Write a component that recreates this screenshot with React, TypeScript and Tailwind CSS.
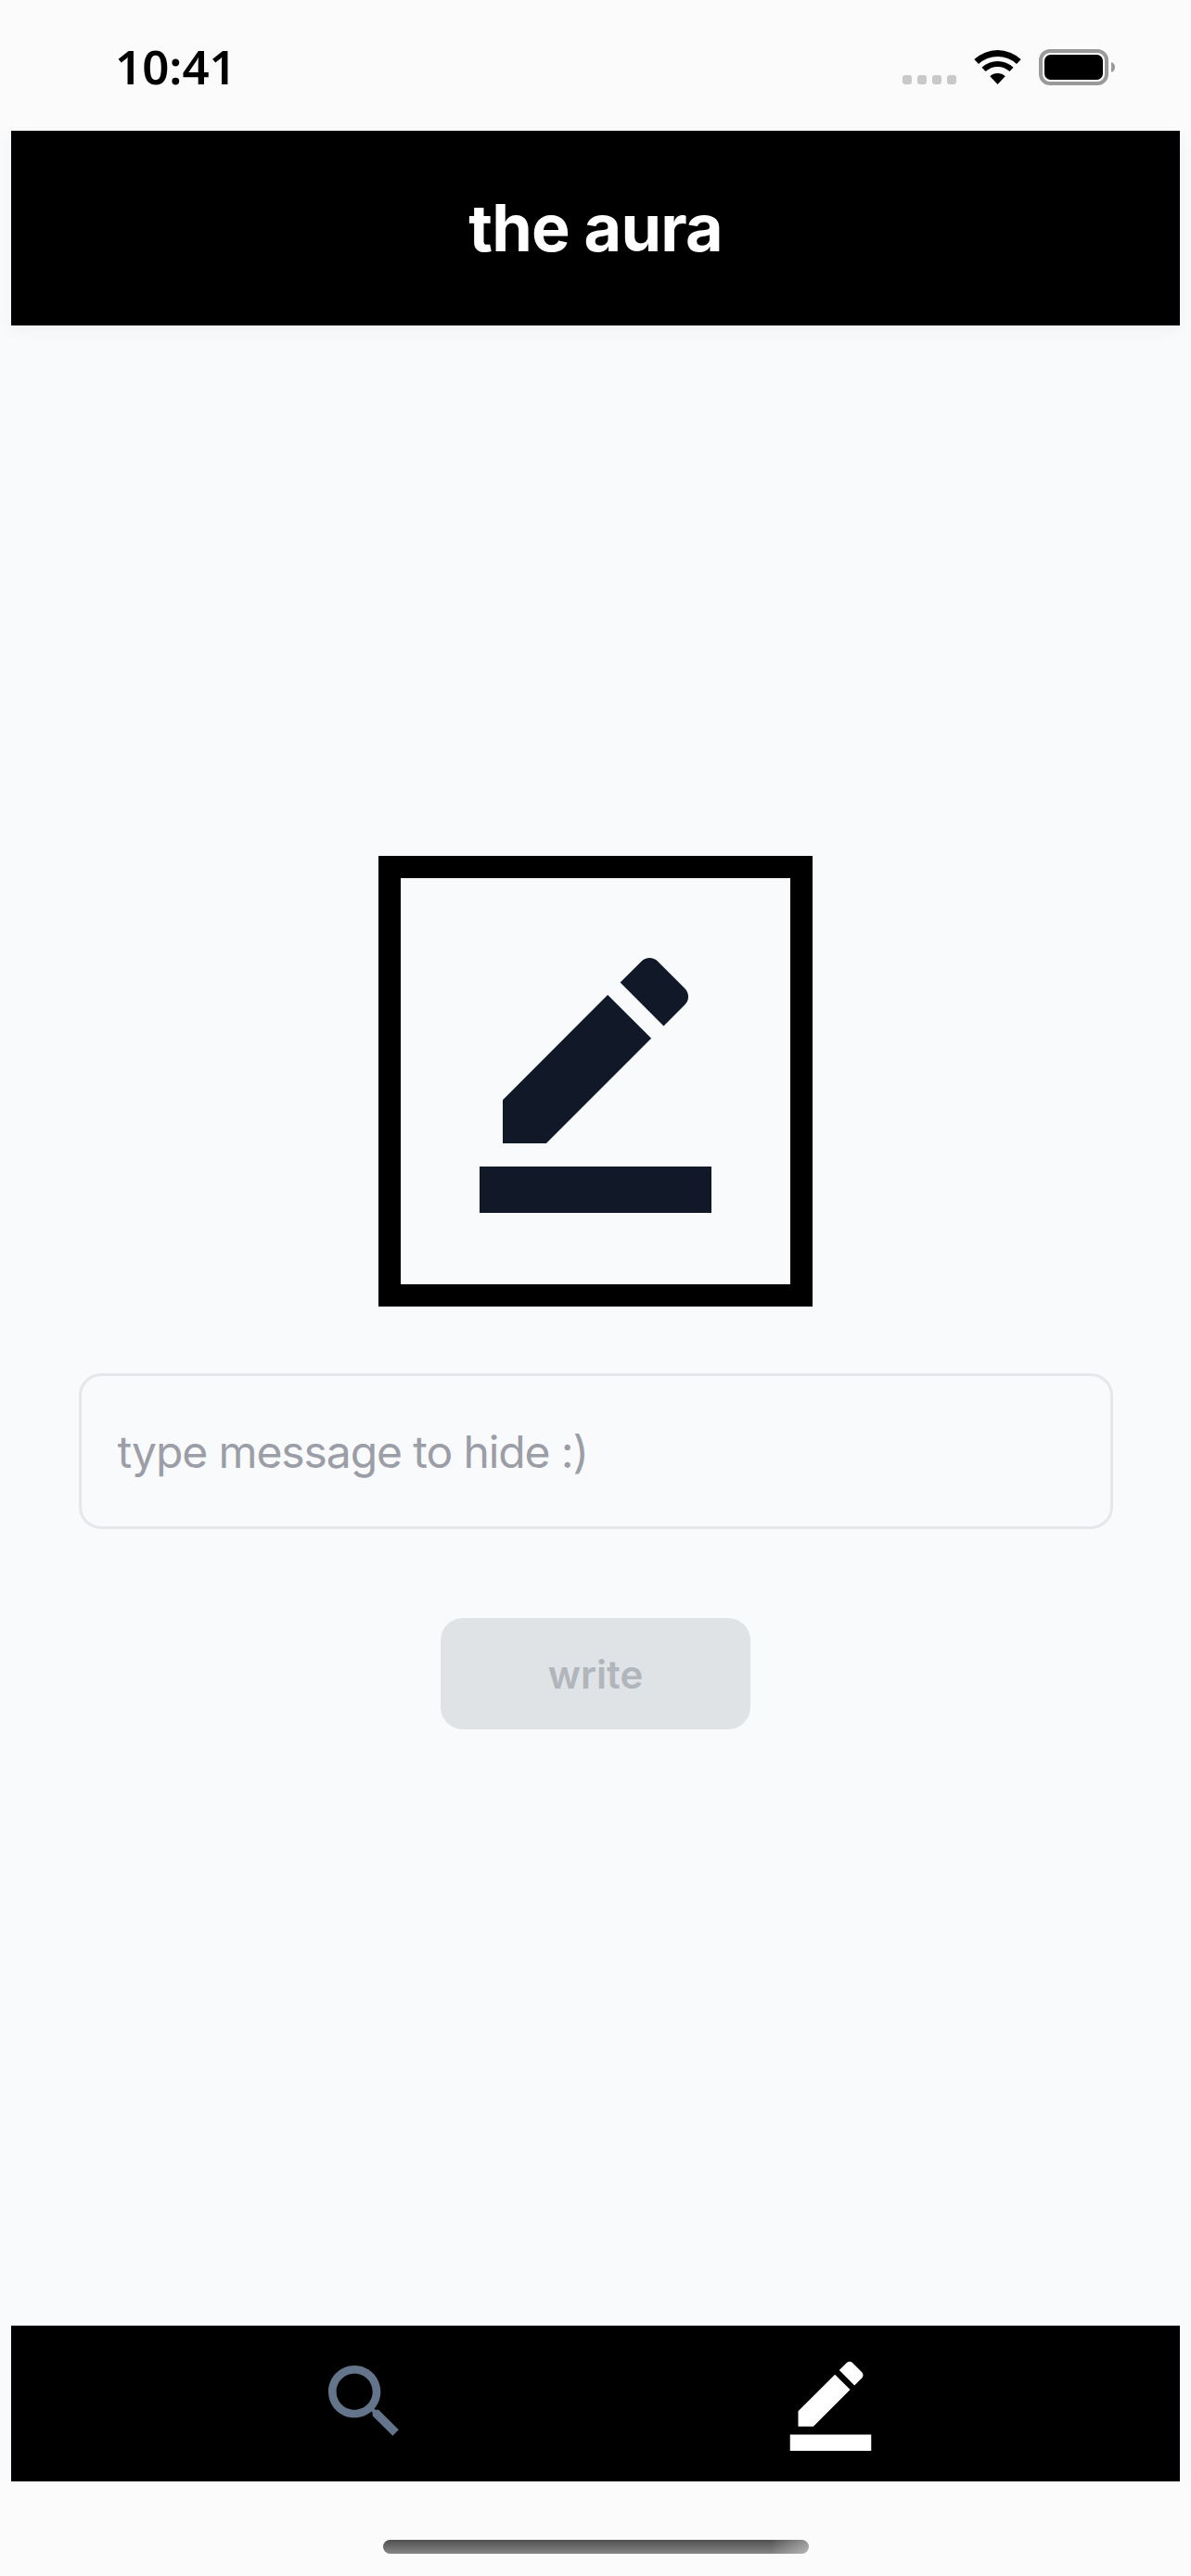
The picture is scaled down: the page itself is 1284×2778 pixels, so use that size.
function PenIcon({ className }: { className: string }) {
  return (
    <svg viewBox="0 0 24 24" fill="currentColor" className={className}>
      <path d="M22 24H2v-4h20v4zM13.06 5.19l3.75 3.75L7.75 18H4v-3.75l9.06-9.06zm4.82 2.68-3.75-3.75 1.83-1.83c.39-.39 1.02-.39 1.41 0l2.34 2.34c.39.39.39 1.02 0 1.41l-1.83 1.83z" />
    </svg>
  );
}

function SearchIcon({ className }: { className: string }) {
  return (
    <svg viewBox="0 0 24 24" fill="currentColor" className={className}>
      <path d="M15.5 14h-.79l-.28-.27C15.41 12.59 16 11.11 16 9.5 16 5.91 13.09 3 9.5 3S3 5.91 3 9.5 5.91 16 9.5 16c1.61 0 3.09-.59 4.23-1.57l.27.28v.79l5 4.99L20.49 19l-4.99-5zm-6 0C7.01 14 5 11.99 5 9.5S7.01 5 9.5 5 14 7.01 14 9.5 11.99 14 9.5 14z" />
    </svg>
  );
}

function StatusBar() {
  return (
    <div className="h-[141px] bg-[#fbfbfb] flex items-start justify-between pl-[124px] pr-[82px]">
      <span className="mt-[36px] font-['Noto_Sans',sans-serif] text-[51px] leading-[70px] font-semibold text-black">10:41</span>
      <div className="flex items-start mt-[53px]">
        <div className="flex gap-[6px] mt-[28px] mr-[19px]">
          <span className="w-[10px] h-[10px] rounded-[3px] bg-[#c9c9c9]" />
          <span className="w-[10px] h-[10px] rounded-[3px] bg-[#c9c9c9]" />
          <span className="w-[10px] h-[10px] rounded-[3px] bg-[#c9c9c9]" />
          <span className="w-[10px] h-[10px] rounded-[3px] bg-[#c9c9c9]" />
        </div>
        <svg viewBox="0 0 51 37" className="w-[51px] h-[37px] mt-[1px] mr-[19px]" fill="#000">
          <path d="M.3 10A37 37 0 0 1 50.7 10L46 15.1A30 30 0 0 0 5 15.1Z" />
          <path d="M8.5 18.7A25 25 0 0 1 42.5 18.7L38.5 23.1A19 19 0 0 0 12.5 23.1Z" />
          <path d="M17.3 28.2A12 12 0 0 1 33.7 28.2L25.5 37Z" />
        </svg>
        <svg viewBox="0 0 82 39" className="w-[82px] h-[39px]">
          <rect x="2" y="2" width="71" height="35" rx="10" fill="none" stroke="#999" strokeWidth="4" />
          <rect x="6" y="6" width="63" height="27" rx="6.5" fill="#000" />
          <path d="M78 14c2.500.6 4 2.800 4 5.500s-1.500 4.900-4 5.500z" fill="#999" />
        </svg>
      </div>
    </div>
  );
}

export default function App() {
  return (
    <div className="w-[1284px] h-[2778px] flex flex-col bg-[#f9fafc] font-['Inter',sans-serif] overflow-hidden">
      <StatusBar />

      <header className="mx-3 h-[210px] bg-black flex items-center justify-center shadow-[0_6px_16px_rgba(0,0,0,0.04)]">
        <h1 className="text-[70px] font-bold text-white leading-none tracking-[-0.8px]">the aura</h1>
      </header>

      <main className="flex-1 flex flex-col items-center pt-[572px]">
        <div className="w-[468px] h-[486px] border-[24px] border-black flex justify-center pt-[61px]">
          <PenIcon className="w-[300px] h-[300px] text-[#111827]" />
        </div>

        <input
          placeholder="type message to hide :)"
          className="mt-[72px] w-[1115px] h-[168px] rounded-[24px] border-[3px] border-[#e5e7eb] bg-[#f9fafb] pl-[39px] text-[48px] tracking-[-1.1px] text-gray-900 placeholder:text-[#9c9ea7] outline-none"
        />

        <button
          disabled
          className="mt-[96px] w-[334px] h-[120px] rounded-[24px] bg-[#e0e3e6] text-[42px] font-semibold text-[#b1b5bc]"
        >
          write
        </button>
      </main>

      <nav className="mx-3 h-[168px] bg-black flex justify-center gap-[398px] pt-[30px] pl-[4px]">
        <SearchIcon className="w-[104px] h-[104px] text-[#64748b]" />
        <PenIcon className="w-[105px] h-[105px] text-white" />
      </nav>

      <div className="h-[102px] bg-[#fbfbfb] flex justify-center pt-[63px]">
        <div className="w-[459px] h-[15px] rounded-[8px] bg-[linear-gradient(to_right,transparent_91%,rgba(255,255,255,0.4)),linear-gradient(to_bottom,#505050,#868686)]" />
      </div>
    </div>
  );
}
